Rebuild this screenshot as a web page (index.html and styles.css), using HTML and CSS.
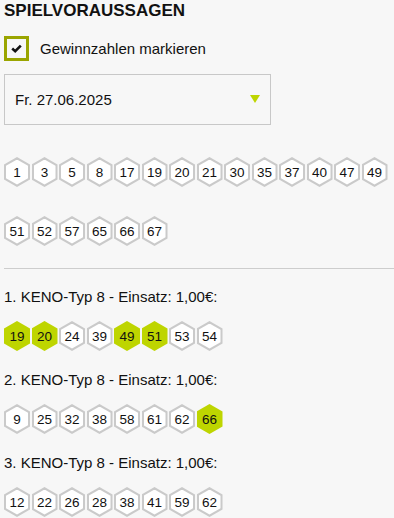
FILE: index.html
```html
<!DOCTYPE html>
<html lang="de">
<head>
  <meta charset="UTF-8" />
  <meta name="viewport" content="width=device-width, initial-scale=1.0"/>
  <title>Spielvoraussagen</title>
  <link rel="stylesheet" href="styles.css">
</head>
<body>
  <h1>SPIELVORAUSSAGEN</h1>

  <label class="check-row">
    <span class="checkbox">
      <svg width="11" height="9" viewBox="0 0 11 9"><path d="M1.2 4.6 L4.2 7.2 L9.8 1.6" fill="none" stroke="#111" stroke-width="2.6"/></svg>
    </span>
    Gewinnzahlen markieren
  </label>

  <div class="select">
    <span>Fr. 27.06.2025</span>
    <span class="arrow"></span>
  </div>

  <div class="numbers draw">
    <span class="hex">1</span><span class="hex">3</span><span class="hex">5</span><span class="hex">8</span>
    <span class="hex">17</span><span class="hex">19</span><span class="hex">20</span><span class="hex">21</span>
    <span class="hex">30</span><span class="hex">35</span><span class="hex">37</span><span class="hex">40</span>
    <span class="hex">47</span><span class="hex">49</span><span class="hex">51</span><span class="hex">52</span>
    <span class="hex">57</span><span class="hex">65</span><span class="hex">66</span><span class="hex">67</span>
  </div>

  <hr>

  <div class="tip">
    <p>1. KENO-Typ 8 - Einsatz: 1,00€:</p>
    <div class="numbers">
      <span class="hex hit">19</span><span class="hex hit">20</span><span class="hex">24</span><span class="hex">39</span>
      <span class="hex hit">49</span><span class="hex hit">51</span><span class="hex">53</span><span class="hex">54</span>
    </div>
  </div>

  <div class="tip">
    <p>2. KENO-Typ 8 - Einsatz: 1,00€:</p>
    <div class="numbers">
      <span class="hex">9</span><span class="hex">25</span><span class="hex">32</span><span class="hex">38</span>
      <span class="hex">58</span><span class="hex">61</span><span class="hex">62</span><span class="hex hit">66</span>
    </div>
  </div>

  <div class="tip">
    <p>3. KENO-Typ 8 - Einsatz: 1,00€:</p>
    <div class="numbers">
      <span class="hex">12</span><span class="hex">22</span><span class="hex">26</span><span class="hex">28</span>
      <span class="hex">38</span><span class="hex">41</span><span class="hex">59</span><span class="hex">62</span>
    </div>
  </div>
</body>
</html>
```

FILE: styles.css
```css
html, body {
  margin: 0;
  padding: 0;
  background-color: #f7f7f7;
  color: #111;
  font-family: 'Liberation Sans', Arial, sans-serif;
}

body {
  padding: 0 0 0 4px;
  overflow: hidden;
}

h1 {
  margin: 0;
  font-size: 17px;
  line-height: 22px;
  font-weight: bold;
  color: #111;
}

.check-row {
  display: flex;
  align-items: center;
  gap: 11px;
  margin-top: 14px;
  font-size: 15px;
}

.checkbox {
  width: 19px;
  height: 19px;
  border: 3px solid #9aa500;
  display: flex;
  align-items: center;
  justify-content: center;
}

.select {
  display: flex;
  align-items: center;
  justify-content: space-between;
  margin-top: 13px;
  padding: 0 10px;
  box-sizing: border-box;
  width: 267px;
  height: 51px;
  border: 1px solid #c8c8c8;
  font-size: 15px;
}

.arrow {
  width: 0;
  height: 0;
  border-left: 5.5px solid transparent;
  border-right: 5.5px solid transparent;
  border-top: 8px solid #bed500;
  margin-top: -1px;
}

.numbers {
  display: flex;
  flex-wrap: wrap;
  gap: 29px 1.5px;
}

.draw {
  margin-top: 32px;
}

.hex {
  position: relative;
  width: 26px;
  height: 30px;
  display: flex;
  align-items: center;
  justify-content: center;
  font-size: 13.5px;
  color: #111;
  background: #cacaca;
  clip-path: polygon(50% 0, 100% 25%, 100% 75%, 50% 100%, 0 75%, 0 25%);
  z-index: 0;
}

.hex::before {
  content: "";
  position: absolute;
  inset: 2.5px 2px;
  background: #fff;
  clip-path: polygon(50% 0, 100% 25%, 100% 75%, 50% 100%, 0 75%, 0 25%);
  z-index: -1;
}

.hex.hit {
  background: #bed500;
}

.hex.hit::before {
  background: #bed500;
}

hr {
  border: none;
  border-top: 1px solid #cdcdcd;
  margin: 22px 0 0;
}

.tip p {
  margin: 19px 0 15px;
  font-size: 15px;
  line-height: 18px;
}

.tip + .tip p {
  margin-top: 20px;
}
```
